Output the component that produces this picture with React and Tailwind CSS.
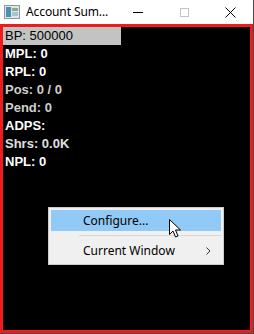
import React from "react";

const rows = [
  { label: "MPL: 0", color: "text-white" },
  { label: "RPL: 0", color: "text-white" },
  { label: "Pos: 0 / 0", color: "text-[#d0d0d0]" },
  { label: "Pend: 0", color: "text-[#d0d0d0]" },
  { label: "ADPS:", color: "text-white" },
  { label: "Shrs: 0.0K", color: "text-[#e0e0e0]" },
  { label: "NPL: 0", color: "text-white" },
];

function AppIcon() {
  return (
    <svg width="16" height="14" viewBox="0 0 16 14">
      <rect x="0.5" y="0.5" width="15" height="13" fill="#dfe6ea" stroke="#8a9aa3" />
      <rect x="2" y="2" width="5" height="10" fill="#4f8fb0" />
      <rect x="8" y="3" width="6" height="3" fill="#7fb37a" />
      <rect x="8" y="7" width="6" height="4" fill="#a9c3d0" />
    </svg>
  );
}

export default function App() {
  return (
    <div className="w-[254px] h-[334px] bg-white flex flex-col border-r border-b border-[#4a4a4a] font-['Liberation_Sans',sans-serif]">
      {/* title bar */}
      <div className="h-[24px] flex items-center shrink-0">
        <div className="ml-[4px] mr-[6px] flex items-center">
          <AppIcon />
        </div>
        <span className="text-[12px] text-black font-['Noto_Sans',sans-serif] leading-none tracking-[-0.1px]">
          Account Sum...
        </span>
        <div className="ml-auto flex items-center h-full">
          <div className="w-[46px] h-full flex items-center justify-center">
            <div className="w-[10px] h-[1px] bg-black" />
          </div>
          <div className="w-[46px] h-full flex items-center justify-center">
            <div className="w-[9px] h-[9px] border border-[#c4c4c4]" />
          </div>
          <div className="w-[46px] h-full flex items-center justify-center">
            <svg width="11" height="11" viewBox="0 0 11 11">
              <path d="M0.5 0.5L10.5 10.5M10.5 0.5L0.5 10.5" stroke="#000" strokeWidth="1" />
            </svg>
          </div>
        </div>
      </div>

      {/* client area */}
      <div className="relative flex-1 bg-black border-[3px] border-[#ee1c1c]">
        <div className="flex flex-col">
          <div className="w-[118px] h-[18px] bg-[#c3c3c3] text-black text-[13px] leading-[18px] pl-[2px]">
            BP: 500000
          </div>
          {rows.map((r) => (
            <div key={r.label} className={`h-[18px] text-[13px] leading-[18px] font-bold pl-[2px] ${r.color}`}>
              {r.label}
            </div>
          ))}
        </div>

        {/* context menu */}
        <div className="absolute left-[45px] top-[180px] w-[176px] bg-[#f0f0f0] border border-[#cccccc] shadow-[2px_2px_3px_rgba(0,0,0,0.4)] py-[2px] px-[2px] font-['Noto_Sans',sans-serif] text-[12px] text-black">
          <div className="relative h-[21px] bg-[#91c9f7] flex items-center pl-[32px]">
            Configure...
            <svg className="absolute left-[118px] top-[9px]" width="12" height="19" viewBox="0 0 12 19">
              <path d="M0.5 0.5 L0.5 15.5 L4 12 L6.5 18 L9 17 L6.5 11 L11.5 11 Z" fill="#fff" stroke="#000" strokeWidth="1" />
            </svg>
          </div>
          <div className="h-[9px] flex items-center pl-[28px]">
            <div className="w-full h-[1px] bg-[#d7d7d7]" />
          </div>
          <div className="h-[22px] flex items-center pl-[32px] pr-[10px]">
            <span>Current Window</span>
            <svg className="ml-auto" width="5" height="8" viewBox="0 0 5 8">
              <path d="M0.5 0.5L4 4L0.5 7.5" stroke="#333" fill="none" strokeWidth="1" />
            </svg>
          </div>
        </div>
      </div>
    </div>
  );
}
